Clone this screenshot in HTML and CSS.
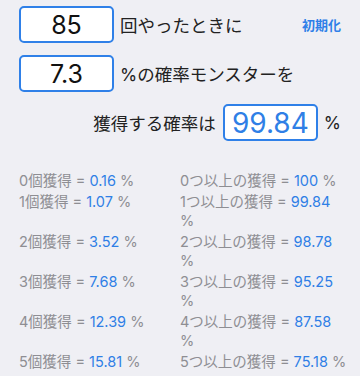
FILE: index.html
```html
<!DOCTYPE html>
<html lang="ja">
<head>
<meta charset="utf-8">
<link rel="stylesheet" href="styles.css">
</head>
<body>
<div class="page">
  <div class="row">
    <div class="box">85</div>
    <span class="label">回やったときに</span>
    <span class="reset">初期化</span>
  </div>
  <div class="row">
    <div class="box">7.3</div>
    <span class="label">%の確率モンスターを</span>
  </div>
  <div class="row result">
    <span class="label">獲得する確率は</span>
    <div class="box big">99.84</div>
    <span class="label pct">%</span>
  </div>
  <div class="list">
    <div class="cell">0個獲得 = <b>0.16</b> %</div>
    <div class="cell">0つ以上の獲得 = <b>100</b> %</div>
    <div class="cell">1個獲得 = <b>1.07</b> %</div>
    <div class="cell">1つ以上の獲得 = <b>99.84</b> %</div>
    <div class="cell">2個獲得 = <b>3.52</b> %</div>
    <div class="cell">2つ以上の獲得 = <b>98.78</b> %</div>
    <div class="cell">3個獲得 = <b>7.68</b> %</div>
    <div class="cell">3つ以上の獲得 = <b>95.25</b> %</div>
    <div class="cell">4個獲得 = <b>12.39</b> %</div>
    <div class="cell">4つ以上の獲得 = <b>87.58</b> %</div>
    <div class="cell">5個獲得 = <b>15.81</b> %</div>
    <div class="cell nowrap">5つ以上の獲得 = <b>75.18</b> %</div>
  </div>
</div>
</body>
</html>
```
FILE: styles.css
```css
html, body {
  margin: 0;
  padding: 0;
  background: #efeff4;
}
body {
  font-family: Inter, "Noto Sans CJK JP", sans-serif;
  color: #1c1c1e;
}
.page {
  padding: 6px 19px 0 19px;
  height: 370px;
  overflow: hidden;
}
.row {
  display: flex;
  align-items: center;
  margin-bottom: 12px;
}
.box {
  box-sizing: border-box;
  width: 95px;
  height: 37px;
  border: 2px solid #2f80e8;
  border-radius: 5px;
  background: #fff;
  display: flex;
  align-items: center;
  justify-content: center;
  font-size: 25px;
  color: #111;
  margin-right: 6px;
}
.box.big {
  font-size: 28px;
  color: #2f7fe6;
  margin: 0 6px 0 7px;
}
.label {
  font-size: 17.5px;
  color: #222;
}
.reset {
  margin-left: auto;
  font-size: 13px;
  font-weight: bold;
  color: #2f80e8;
}
.result {
  justify-content: flex-end;
  margin-bottom: 30px;
}
.list {
  display: grid;
  grid-template-columns: 161px 161px;
  row-gap: 2px;
  font-size: 14.5px;
  line-height: 19px;
  color: #8e8e93;
}
.cell.nowrap {
  white-space: nowrap;
}
.cell b {
  font-weight: normal;
  color: #2f7fe6;
}
```
